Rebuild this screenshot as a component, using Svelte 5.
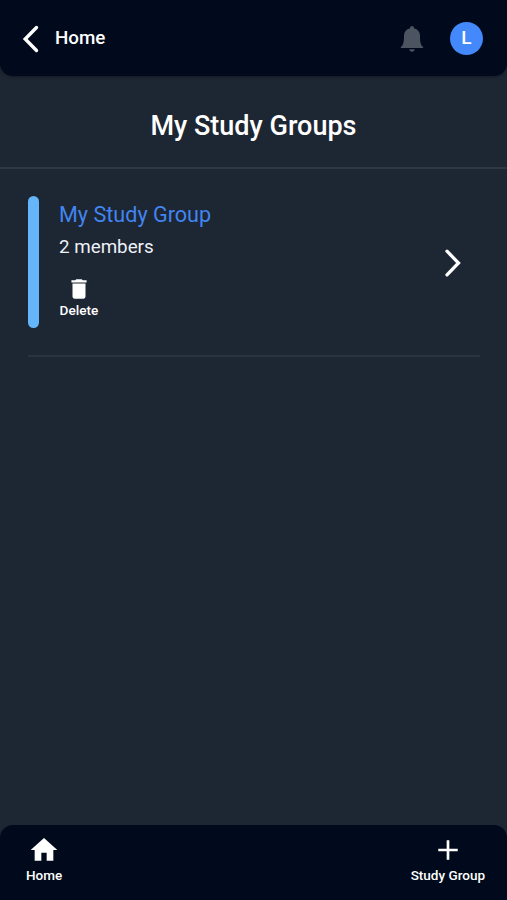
<script lang="ts">
  type Group = { name: string; members: number; color: string };

  let user = { initial: 'L' };
  let groups = $state<Group[]>([
    { name: 'My Study Group', members: 2, color: '#64b5f9' },
  ]);

  function remove(i: number) {
    groups = groups.filter((_, n) => n !== i);
  }
</script>

<div class="screen">
  <header class="topbar">
    <button class="back">
      <svg width="18" height="30" viewBox="0 0 18 30" aria-hidden="true">
        <path d="M14.500 3.500 3.200 15l11.300 11.500" fill="none" stroke="currentColor" stroke-width="3.400" stroke-linecap="round" />
      </svg>
      <span>Home</span>
    </button>
    <div class="topbar-right">
      <button class="bell" aria-label="Notifications">
        <svg width="24" height="28" viewBox="0 0 24 28" aria-hidden="true">
          <path d="M12 1c-1.100 0-1.900.8-1.900 1.800v.5C6.300 4.100 4 7 4 10.800c0 6.200-.6 8.300-2.100 10.100-.7.800-1.200 1.200-1.200 2.100h22.600c0-.9-.5-1.300-1.200-2.100-1.500-1.800-2.100-3.900-2.100-10.100 0-3.800-2.300-6.700-6.100-7.500v-.5C13.900 1.800 13.100 1 12 1z" />
          <path d="M9.300 24.300h5.400c-.1 1.600-1.100 2.500-2.700 2.500s-2.600-.9-2.700-2.500z" />
        </svg>
      </button>
      <div class="avatar">{user.initial}</div>
    </div>
  </header>

  <h1 class="title">My Study Groups</h1>

  <main class="groups">
    {#each groups as group, i}
      <section class="group">
        <div class="stripe" style:background={group.color}></div>
        <div class="group-body">
          <h2>{group.name}</h2>
          <p>{group.members} members</p>
          <button class="delete" onclick={() => remove(i)}>
            <svg width="26" height="26" viewBox="0 0 24 24" aria-hidden="true">
              <path d="M6 19c0 1.100.9 2 2 2h8c1.100 0 2-.9 2-2V7H6v12zM19 4h-3.500l-1-1h-5l-1 1H5v2h14V4z" />
            </svg>
            <span>Delete</span>
          </button>
        </div>
        <svg class="chevron" width="18" height="30" viewBox="0 0 18 30" aria-hidden="true">
          <path d="M3 3.200 14.500 15 3 26.800" fill="none" stroke="currentColor" stroke-width="3.300" stroke-linecap="round" />
        </svg>
      </section>
    {/each}
  </main>

  <nav class="tabbar">
    <button class="tab">
      <svg width="32" height="32" viewBox="0 0 24 24" aria-hidden="true">
        <path d="M10 20v-6h4v6h5v-8h3L12 3 2 12h3v8z" />
      </svg>
      <span>Home</span>
    </button>
    <button class="tab">
      <svg width="32" height="32" viewBox="0 0 24 24" aria-hidden="true">
        <path d="M19.300 13H13v6.300h-2V13H4.700v-2H11V4.700h2V11h6.300v2z" />
      </svg>
      <span>Study Group</span>
    </button>
  </nav>
</div>

<style>
  :global(body) {
    background: #1d2633;
  }
  .screen {
    display: flex;
    flex-direction: column;
    height: 100vh;
    background: #1d2633;
    color: #fff;
    font-family: Roboto, "Liberation Sans", sans-serif;
  }
  button {
    padding: 0;
    border: none;
    background: none;
    color: inherit;
    font-family: inherit;
    cursor: pointer;
  }
  svg {
    display: block;
    fill: currentColor;
  }

  .topbar {
    display: flex;
    align-items: center;
    justify-content: space-between;
    box-sizing: border-box;
    height: 76px;
    padding: 0 24px 0 22px;
    border-radius: 0 0 13px 13px;
    background: #000a1c;
    box-shadow: 0 1px 3px rgba(0, 0, 0, 0.35);
  }
  .back {
    display: flex;
    align-items: center;
    gap: 15px;
    font-size: 18.8px;
    font-weight: 500;
    line-height: 24px;
  }
  .back svg { margin-top: 2px; }
  .topbar-right {
    display: flex;
    align-items: center;
    gap: 26px;
    padding-top: 1px;
  }
  .bell { color: #4c5361; }
  .avatar {
    width: 33px;
    height: 33px;
    border-radius: 50%;
    background: #4489fb;
    font-size: 19px;
    font-weight: 500;
    line-height: 32px;
    text-align: center;
  }

  .title {
    margin: 0;
    padding: 33px 0 23px;
    border-bottom: 2px solid #2d3744;
    font-size: 27px;
    font-weight: 500;
    line-height: 35px;
    text-align: center;
  }

  .groups {
    flex: 1;
    padding: 0 27px 0 28px;
  }
  .group {
    display: flex;
    align-items: center;
    padding: 27px 0;
    border-bottom: 2px solid #2a3441;
  }
  .stripe {
    width: 11px;
    height: 132px;
    border-radius: 6px;
  }
  .group-body {
    flex: 1;
    align-self: stretch;
    padding: 5px 0 0 20px;
  }
  .group-body h2 {
    margin: 0;
    color: #4285f0;
    font-size: 21.6px;
    font-weight: 400;
    line-height: 28px;
  }
  .group-body p {
    margin: 6px 0 0;
    color: #edf1f8;
    font-size: 18.8px;
    line-height: 24px;
  }
  .delete {
    display: flex;
    flex-direction: column;
    align-items: center;
    margin: 17px 0 0 0.6px;
    font-size: 13.6px;
    font-weight: 500;
    line-height: 17px;
  }
  .chevron { margin: 2px 18px 0 0; }

  .tabbar {
    display: flex;
    align-items: flex-start;
    justify-content: space-between;
    box-sizing: border-box;
    height: 75px;
    padding: 9px 22px 0 26px;
    border-radius: 13px 13px 0 0;
    background: #000a1c;
  }
  .tab {
    display: flex;
    flex-direction: column;
    align-items: center;
    font-size: 13.5px;
    font-weight: 500;
    line-height: 19px;
  }
</style>
